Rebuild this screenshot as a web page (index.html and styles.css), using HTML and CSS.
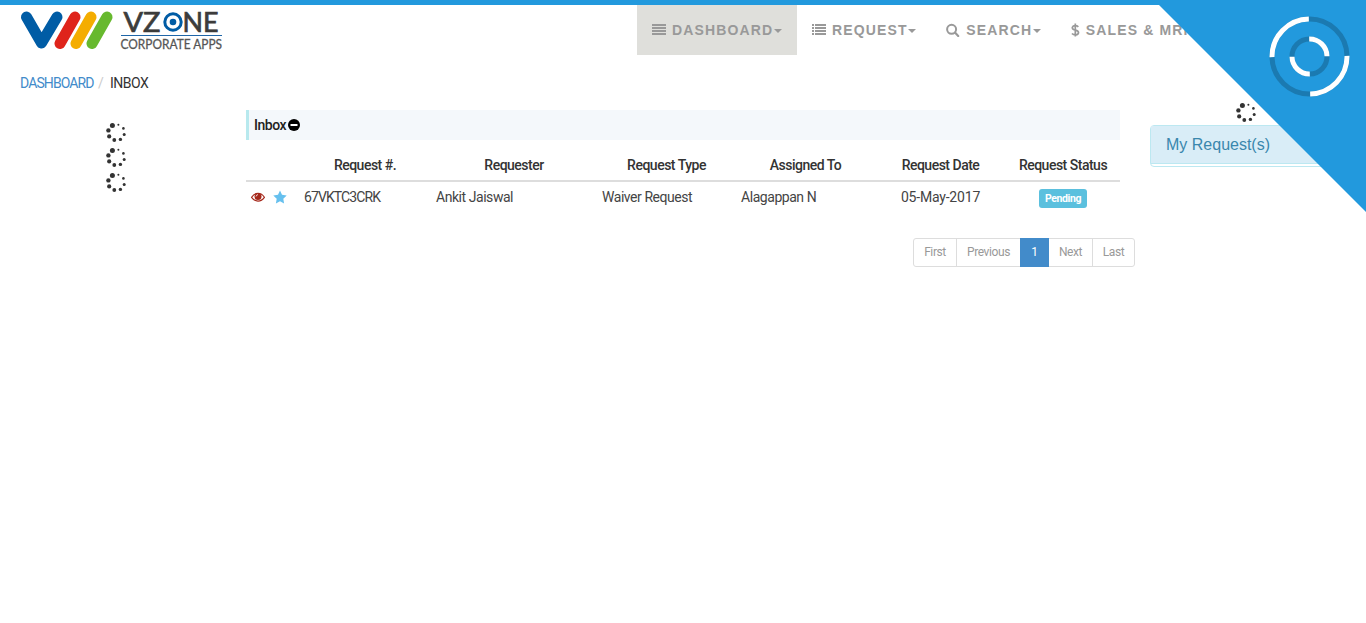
FILE: index.html
```html
<!DOCTYPE html>
<html lang="en">
<head>
<meta charset="utf-8">
<title>VZONE Corporate Apps</title>
<link rel="stylesheet" href="styles.css">
</head>
<body>
<svg class="defs" width="0" height="0">
  <symbol id="spinner" viewBox="0 0 20 20">
    <g fill="#333"><circle cx="6.400" cy="3.400" r="2.500"/><circle cx="2.400" cy="8.400" r="2.200"/><circle cx="3.200" cy="14.400" r="2.100"/><circle cx="8.300" cy="18" r="1.900"/><circle cx="14.400" cy="17.400" r="1.700"/><circle cx="18.200" cy="12.400" r="1.500"/><circle cx="17.400" cy="6.400" r="1.300"/><circle cx="12.400" cy="2.800" r="1"/></g>
  </symbol>
</svg>
<header class="header">
  <svg class="logo" width="204" height="42" viewBox="0 0 204 42">
    <g fill="none" stroke-width="11" stroke-linecap="round" stroke-linejoin="round">
      <path stroke="#005ca5" d="M6.500 7 21.500 33 37 7"/>
      <path stroke="#df241b" d="M40 33.500 55 7"/>
      <path stroke="#f4ad00" d="M56 33.500 71 7"/>
      <path stroke="#67b92e" d="M72 33.500 87 7"/>
    </g>
    <text class="logo-name" x="103.500" y="21.500" textLength="37" lengthAdjust="spacingAndGlyphs">VZ</text>
    <text class="logo-name" x="162.500" y="21.500" textLength="36" lengthAdjust="spacingAndGlyphs">NE</text>
    <circle cx="153" cy="12" r="8.200" fill="none" stroke="#005ca5" stroke-width="3"/>
    <circle cx="153" cy="12" r="3.300" fill="#005ca5"/>
    <path d="M101 25.500h101" stroke="#1f66a8"/>
    <text class="logo-sub" x="100.500" y="39" textLength="101.500" lengthAdjust="spacingAndGlyphs">CORPORATE APPS</text>
  </svg>
  <nav class="nav">
    <a class="nav-item active"><svg width="14" height="14"><path d="M0 2h14M0 5h14M0 8h14M0 11h14" stroke="#999" stroke-width="1.800"/></svg><span>DASHBOARD</span><i class="caret"></i></a>
    <a class="nav-item"><svg width="14" height="14"><path d="M0 2h2M3 2h11M0 5h2M3 5h11M0 8h2M3 8h11M0 11h2M3 11h11" stroke="#999" stroke-width="1.800"/></svg><span>REQUEST</span><i class="caret"></i></a>
    <a class="nav-item"><svg width="14" height="14"><circle cx="5.600" cy="6.300" r="4.500" fill="none" stroke="#999" stroke-width="2"/><path d="m9 9.600 3.200 3.300" stroke="#999" stroke-width="2.200" stroke-linecap="round"/></svg><span>SEARCH</span><i class="caret"></i></a>
    <a class="nav-item"><svg width="9" height="14"><path d="M7.400 3.800C6.500 3 5.500 2.600 4.300 2.600 1 2.600.3 5.800 3 6.700c2 .7 4.700.8 4.500 3-.2 2.600-4.500 2.900-6.600.8M4.300.6v13" fill="none" stroke="#999" stroke-width="1.700"/></svg><span>SALES &amp; MRP</span></a>
  </nav>
</header>
<div class="breadcrumb"><a class="link">DASHBOARD</a><span class="slash">/</span><span class="current">INBOX</span></div>
<main class="columns">
  <aside class="left">
    <svg class="spinner"><use href="#spinner"/></svg>
    <svg class="spinner"><use href="#spinner"/></svg>
    <svg class="spinner"><use href="#spinner"/></svg>
  </aside>
  <section class="inbox">
    <h4 class="inbox-title"><span>Inbox</span><svg width="12" height="12"><circle cx="6" cy="6" r="6"/><path d="M2.500 6h7" stroke="#fff" stroke-width="2"/></svg></h4>
    <table class="requests">
      <colgroup><col class="c-icons"><col class="c-id"><col class="c-requester"><col class="c-type"><col class="c-assigned"><col class="c-date"><col class="c-status"></colgroup>
      <thead><tr><th></th><th>Request #.</th><th>Requester</th><th>Request Type</th><th>Assigned To</th><th>Request Date</th><th>Request Status</th></tr></thead>
      <tbody><tr>
        <td><div class="row-icons"><svg width="14" height="12"><path d="M.6 6.300C4 .9 10 .9 13.400 6.300 10 11.300 4 11.300.6 6.300Z" fill="#fff" stroke="#a5281b" stroke-width="1.200"/><circle cx="7" cy="5.600" r="3.500" fill="#a5281b"/><path d="M5 5.500Q5.200 3.800 7 3.600" fill="none" stroke="#fff" stroke-width=".8"/></svg><svg width="14" height="14"><path d="m7 .5 2 4.300 4.700.6-3.400 3.300.8 4.700L7 11.200l-4.100 2.200.8-4.700L.3 5.400 5 4.800Z" fill="#66c0ee"/></svg></div></td>
        <td class="request-id">67VKTC3CRK</td><td>Ankit Jaiswal</td><td>Waiver Request</td><td>Alagappan N</td><td class="date center">05-May-2017</td><td class="center"><span class="label">Pending</span></td>
      </tr></tbody>
    </table>
    <div class="pagination"><a class="w-first">First</a><a class="w-prev">Previous</a><a class="w-page on">1</a><a class="w-next">Next</a><a class="w-last">Last</a></div>
  </section>
  <aside class="right">
    <svg class="spinner"><use href="#spinner"/></svg>
    <div class="panel"><div class="panel-heading">My Request(s)</div></div>
  </aside>
</main>
<div class="topbar"></div>
<svg class="corner" width="212" height="212">
  <path d="M0 0h212v212Z" fill="#29d"/>
  <g transform="rotate(-1 155.500 56.500)" fill="none" stroke-width="5">
    <circle cx="155.500" cy="56.500" r="37.500" stroke="#1b7ab1"/>
    <path d="M118 56.500A37.500 37.500 0 0 1 155.500 19M193 56.500A37.500 37.500 0 0 1 155.500 94" stroke="#fff"/>
    <circle cx="155.500" cy="56.500" r="17.500" stroke="#1b7ab1"/>
    <path d="M155.500 39A17.500 17.500 0 0 1 173 56.500M155.500 74A17.500 17.500 0 0 1 138 56.500" stroke="#fff"/>
  </g>
</svg>
</body>
</html>
```
FILE: styles.css
```css
* { box-sizing: border-box; }
body { margin: 0; height: 623px; overflow: hidden; background: #fff; color: #333; font: 14px/20px Roboto, "Open Sans", sans-serif; }
.defs { position: absolute; }
.topbar { position: absolute; top: 0; left: 0; width: 100%; height: 5px; background: #29d; }
.corner { position: absolute; top: 0; right: 0; }
.header { display: flex; justify-content: space-between; height: 68px; padding: 5px 0 0 20px; }
.logo { margin-top: 5px; overflow: visible; }
.logo-name { font: 26px Lato, sans-serif; fill: #3c3c3b; stroke: #3c3c3b; stroke-width: .7px; }
.logo-sub { font: 13.5px Lato, sans-serif; fill: #555; stroke: #555; stroke-width: .3px; }
.nav { display: flex; width: 729px; height: 50px; font: bold 14px/20px "Liberation Sans", Arial, sans-serif; letter-spacing: 1.15px; color: #999; }
.nav-item { display: flex; flex: none; align-items: center; padding: 0 15px; white-space: nowrap; }
.nav-item svg { flex: none; margin-right: 6px; }
.nav-item.active { width: 160px; background: #dfdfdb; }
.caret { margin: 2px 0 0 .5px; border: 4px solid transparent; border-top-color: #999; border-bottom: 0; }
.breadcrumb { display: flex; height: 34px; padding: 5px 20px; letter-spacing: -.9px; }
.link { width: 78px; color: #428bca; }
.slash { width: 12px; color: #ccc; }
.current { letter-spacing: -.5px; }
.columns { display: flex; }
.left { display: flex; flex-direction: column; align-items: center; gap: 5px; width: 232px; padding-top: 20px; }
.spinner { display: block; width: 20px; height: 20px; }
.inbox { width: 889px; padding: 8px 0 0 14px; }
.inbox-title { display: flex; align-items: center; gap: 2.5px; width: 874px; height: 30px; margin: 0; padding-left: 5px; border-left: 3px solid #b8e9ee; background: #f4f8fb; font-size: 14px; font-weight: 500; letter-spacing: -.5px; color: #222; }
.requests { width: 874px; margin-top: 10px; table-layout: fixed; border-collapse: separate; border-spacing: 0; white-space: nowrap; }
.requests th { height: 32px; padding: 0; border-bottom: 2px solid #ddd; font-weight: 500; letter-spacing: -.5px; }
.requests td { height: 31px; padding: 0 5px 2px; color: #444; letter-spacing: -.45px; }
.requests .request-id { letter-spacing: -.9px; }
.requests .date { letter-spacing: -.2px; }
.c-icons { width: 53px; } .c-id { width: 132px; } .c-requester { width: 166px; } .c-type { width: 139px; } .c-assigned { width: 139px; } .c-date { width: 131px; } .c-status { width: 114px; }
.requests .center { text-align: center; }
.row-icons { display: flex; align-items: center; gap: 8px; padding-top: 1px; }
.label { display: block; width: 48px; height: 19px; margin: 4px auto 0; border-radius: 3px; background: #5bc0de; color: #fff; font-size: 10.5px; font-weight: 700; letter-spacing: -.4px; line-height: 19px; }
.pagination { display: flex; width: 222px; height: 29px; margin: 25px 0 0 667px; border: 1px solid #ddd; border-radius: 3px; font-size: 12px; letter-spacing: -.4px; line-height: 26px; color: #999; text-align: center; }
.pagination a + a { border-left: 1px solid #ddd; }
.w-first { width: 42px; } .w-prev { width: 64px; } .w-page { width: 29px; } .w-next { width: 43px; } .w-last { width: 42px; }
.pagination a.on { margin: -1px 0; border: 1px solid #428bca; background: #428bca; color: #fff; }
.pagination .on + a { border-left: 0; }
.right { display: flex; flex-direction: column; align-items: center; width: 191px; margin-left: 29px; }
.panel { width: 100%; height: 42px; margin-top: 3px; border: 1px solid #bce8f1; border-radius: 4px; }
.panel-heading { height: 38px; padding: 0 15px; border-bottom: 1px solid #bce8f1; background: #d9edf7; color: #3a87ad; font: 16px/38px "Liberation Sans", Arial, sans-serif; }
```
